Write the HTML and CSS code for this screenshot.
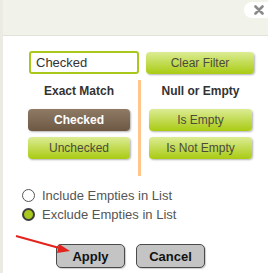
FILE: index.html
```html
<!DOCTYPE html>
<html>
<head>
<meta charset="utf-8">
<link rel="stylesheet" href="styles.css">
</head>
<body>
<div class="panel">
  <div class="header">
    <span class="close">
      <svg width="10" height="10" viewBox="0 0 10 10"><path d="M1.5 1.5 L8.5 8.5 M8.5 1.5 L1.5 8.5" stroke="#8a8a8a" stroke-width="2.6" stroke-linecap="round"/></svg>
    </span>
  </div>
  <div class="content">
    <div class="row-top">
      <div class="field">Checked</div>
      <button class="btn green wide">Clear Filter</button>
    </div>
    <div class="cols">
      <div class="col">
        <div class="col-title">Exact Match</div>
        <button class="btn brown">Checked</button>
        <button class="btn green">Unchecked</button>
      </div>
      <div class="sep"></div>
      <div class="col">
        <div class="col-title">Null or Empty</div>
        <button class="btn green">Is Empty</button>
        <button class="btn green">Is Not Empty</button>
      </div>
    </div>
    <div class="radios">
      <label class="radio"><span class="dot"></span>Include Empties in List</label>
      <label class="radio"><span class="dot on"></span>Exclude Empties in List</label>
    </div>
    <div class="actions">
      <button class="act">Apply</button>
      <button class="act">Cancel</button>
    </div>
  </div>
  <svg class="arrow" width="60" height="30" viewBox="0 0 60 30">
    <path d="M1 3 L48 16" stroke="#e3231c" stroke-width="2" fill="none"/>
    <path d="M55 18 L44 11 L42 20 Z" fill="#e3231c"/>
  </svg>
</div>
</body>
</html>
```
FILE: styles.css
```css
html, body {
  margin: 0;
  padding: 0;
  background: #fff;
}
body {
  font-family: "Liberation Sans", Arial, sans-serif;
  width: 268px;
  height: 273px;
  overflow: hidden;
}
.panel {
  position: relative;
  height: 273px;
  border-left: 3px solid #ebebe4;
  box-sizing: border-box;
}
.header {
  height: 33px;
  background: #f1f3ea;
  border-bottom: 1px solid #e1e2da;
  display: flex;
  justify-content: flex-end;
  align-items: flex-start;
  padding-top: 2px;
  box-sizing: content-box;
}
.close {
  width: 32px;
  height: 16px;
  margin-right: -8px;
  background: #fff;
  border-radius: 8px;
  display: flex;
  align-items: center;
  padding-left: 10px;
  box-sizing: border-box;
}
.content {
  padding: 15px 0 0 25px;
}
.row-top {
  display: flex;
  align-items: center;
  gap: 7px;
}
.field {
  width: 110px;
  height: 23px;
  box-sizing: border-box;
  border: 2px solid #a8c81c;
  border-radius: 3px;
  margin-left: 1px;
  padding-left: 5px;
  font-size: 13px;
  line-height: 19px;
  color: #333;
}
.btn {
  display: block;
  font-family: "Liberation Sans", Arial, sans-serif;
  font-size: 12px;
  height: 22px;
  width: 102px;
  border: none;
  border-radius: 4px;
  padding: 0;
  color: #4b4b3c;
  box-shadow: 1px 1px 2px rgba(0,0,0,0.3);
}
.green {
  background: linear-gradient(#dbec94, #a9cb12);
}
.brown {
  background: linear-gradient(#8f7b65, #6c5843);
  color: #fff;
  font-weight: bold;
}
.wide {
  width: 108px;
}
.cols {
  display: flex;
  margin-top: 6px;
  gap: 8px;
}
.col {
  display: flex;
  flex-direction: column;
  gap: 6px;
  padding-top: 3px;
}
.col-title {
  font-size: 12px;
  font-weight: bold;
  color: #333;
  text-align: center;
  height: 17px;
  line-height: 17px;
  margin-bottom: 3px;
}
.col:last-child .btn {
  width: 103px;
}
.sep {
  width: 3px;
  height: 96px;
  background: #ffc58a;
}
.radios {
  margin-top: 12px;
  margin-left: -6px;
  display: flex;
  flex-direction: column;
  gap: 5px;
}
.radio {
  display: flex;
  align-items: center;
  gap: 7px;
  font-size: 13px;
  color: #555;
  height: 14px;
}
.dot {
  width: 13px;
  height: 13px;
  box-sizing: border-box;
  border: 1px solid #555;
  border-radius: 50%;
  background: #fff;
}
.dot.on {
  border: 2px solid #3c3c3c;
  background: #a8c81c;
}
.actions {
  display: flex;
  gap: 11px;
  margin-top: 23px;
  margin-left: 28px;
}
.act {
  width: 69px;
  height: 24px;
  background: #c4c4c4;
  border: 1px solid #4a4a4a;
  border-radius: 5px;
  font-family: "Liberation Sans", Arial, sans-serif;
  font-size: 13px;
  font-weight: bold;
  color: #111;
  padding: 0;
  box-shadow: 1px 1px 1px rgba(0,0,0,0.2);
}
.arrow {
  position: absolute;
  left: 12px;
  top: 233px;
}
```
